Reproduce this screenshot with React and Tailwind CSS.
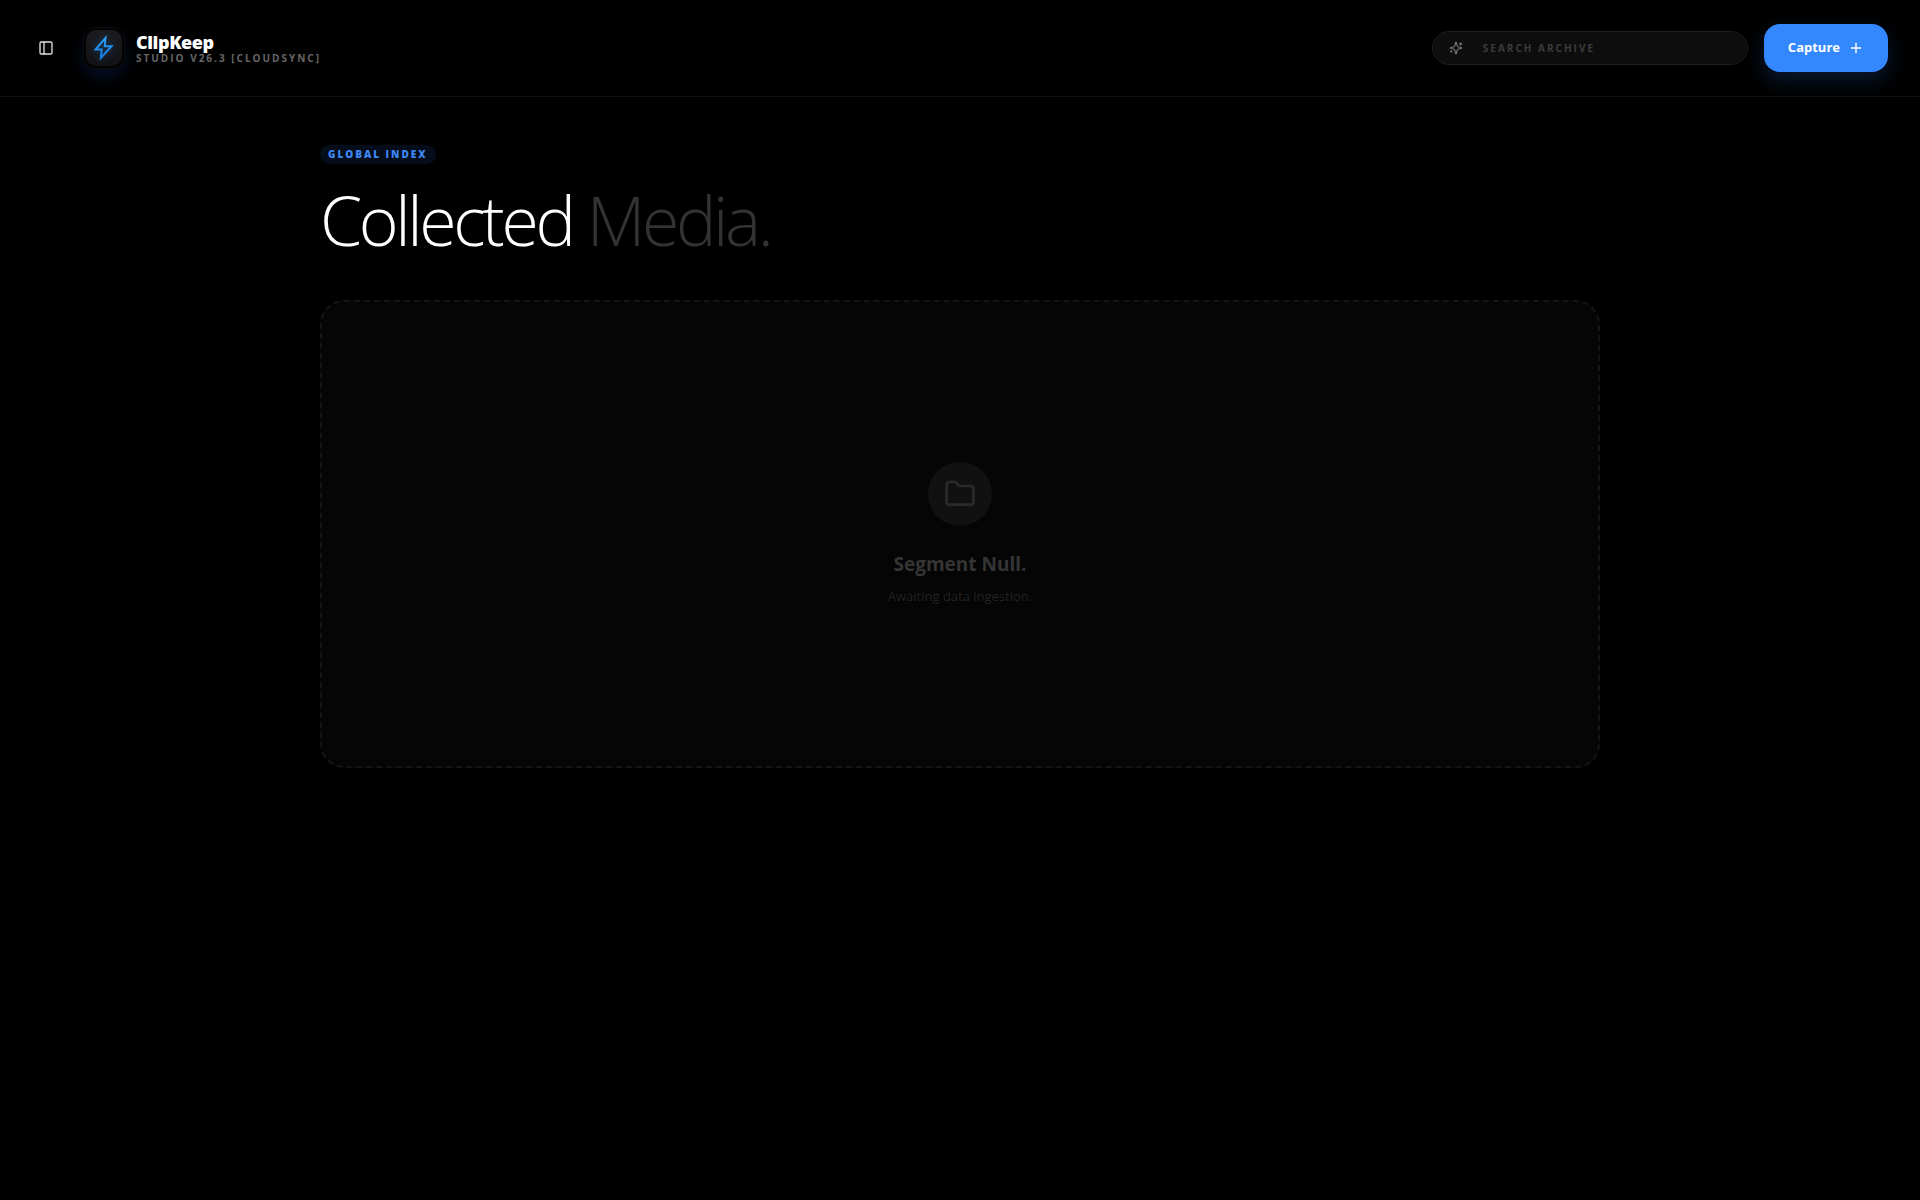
import React, { useState } from 'react'
import { PanelLeft, Plus, Folder } from 'lucide-react'

const BoltIcon = ({ className }) => (
  <svg viewBox="0 0 24 28" fill="none" stroke="url(#bolt)" strokeWidth="2" className={className} aria-hidden="true">
    <defs>
      <linearGradient id="bolt" x1="0" y1="0" x2="0" y2="1">
        <stop offset="0" stopColor="#2ba0f5" />
        <stop offset="1" stopColor="#1878dc" />
      </linearGradient>
    </defs>
    <path d="M13.5 4 3.5 15.5h6.2L8.8 24 19.5 12.2h-6.8Z" />
  </svg>
)

const SparklesIcon = ({ className }) => (
  <svg
    viewBox="0 0 24 24"
    fill="none"
    stroke="currentColor"
    strokeWidth="2"
    strokeLinecap="round"
    strokeLinejoin="round"
    className={className}
    aria-hidden="true"
  >
    <path d="M9.937 15.5A2 2 0 0 0 8.5 14.063l-6.135-1.582a.5.5 0 0 1 0-.962L8.5 9.936A2 2 0 0 0 9.937 8.5l1.582-6.135a.5.5 0 0 1 .963 0L14.063 8.5A2 2 0 0 0 15.5 9.937l6.135 1.581a.5.5 0 0 1 0 .964L15.5 14.063a2 2 0 0 0-1.437 1.437l-1.582 6.135a.5.5 0 0 1-.963 0z" />
    <path d="M20 3v4" />
    <path d="M22 5h-4" />
    <path d="M4 17v2" />
    <path d="M5 18H3" />
  </svg>
)

const Header = ({ query, onQueryChange }) => (
  <header className="flex items-center justify-between border-b border-[#101010] px-8 py-6">
    <div className="flex items-center gap-6">
      <button aria-label="Toggle sidebar" className="p-1.5 text-[#e0e0e0]">
        <PanelLeft className="h-4 w-4" />
      </button>
      <div className="flex items-center gap-3">
        <div className="flex h-10 w-10 items-center justify-center rounded-xl border-2 border-[#020202] bg-linear-to-b from-[#1c1c1f] to-[#121215] shadow-[0_0_0_1px_#0e0e0e,0_8px_16px_rgba(30,90,220,0.18)]">
          <BoltIcon className="h-7 w-6 drop-shadow-[0_0_4px_rgba(30,136,229,0.4)]" />
        </div>
        <div>
          <div className="text-lg leading-5 font-extrabold tracking-tight text-white">ClipKeep</div>
          <div className="text-[10px] leading-3 font-bold tracking-[0.2em] text-[#666] uppercase">
            Studio v26.3 [CloudSync]
          </div>
        </div>
      </div>
    </div>

    <div className="flex items-center gap-4">
      <label className="flex w-79 items-center gap-5 rounded-full border border-[#1d1d1d] bg-[#0d0d0d] px-4 py-2">
        <SparklesIcon className="h-3.5 w-3.5 shrink-0 text-[#777]" />
        <input
          type="text"
          aria-label="Search archive"
          placeholder="SEARCH ARCHIVE"
          value={query}
          onChange={(e) => onQueryChange(e.target.value)}
          className="min-w-0 flex-1 bg-transparent text-[10px] leading-4 font-bold tracking-[0.2em] text-white outline-none placeholder:text-[#3c3c3c]"
        />
      </label>
      <button className="flex h-12 items-center gap-2 rounded-2xl bg-[#3388ff] px-6 text-[13px] font-bold text-white shadow-[0_8px_20px_rgba(51,136,255,0.2)]">
        Capture
        <Plus className="h-4 w-4" />
      </button>
    </div>
  </header>
)

const EmptyState = () => (
  <div className="flex flex-col items-center rounded-3xl border-2 border-dashed border-[#141414] bg-[#050505] py-40 text-center">
    <div className="flex h-16 w-16 items-center justify-center rounded-full bg-[#111]">
      <Folder className="h-8 w-8 text-[#2a2a2a]" />
    </div>
    <h3 className="mt-6 text-[19px] leading-7 font-bold text-[#353535]">Segment Null.</h3>
    <p className="mt-2 text-[13px] leading-5 text-[#222]">Awaiting data ingestion.</p>
  </div>
)

export default function App() {
  const [query, setQuery] = useState('')

  return (
    <div className="min-h-screen bg-black font-['Open_Sans','Noto_Sans',sans-serif] text-white">
      <Header query={query} onQueryChange={setQuery} />
      <main className="mx-auto max-w-7xl py-12">
        <div className="flex">
          <span className="rounded-full bg-[#050d1a] px-2 py-0.5 text-[10px] leading-[15px] font-extrabold tracking-[0.2em] text-[#3f87f5] uppercase">
            Global Index
          </span>
        </div>
        <h1 className="mt-5 mb-11 text-[68px] leading-[72px] font-light tracking-tighter">
          Collected <span className="text-[#333]">Media.</span>
        </h1>
        <EmptyState />
      </main>
    </div>
  )
}
